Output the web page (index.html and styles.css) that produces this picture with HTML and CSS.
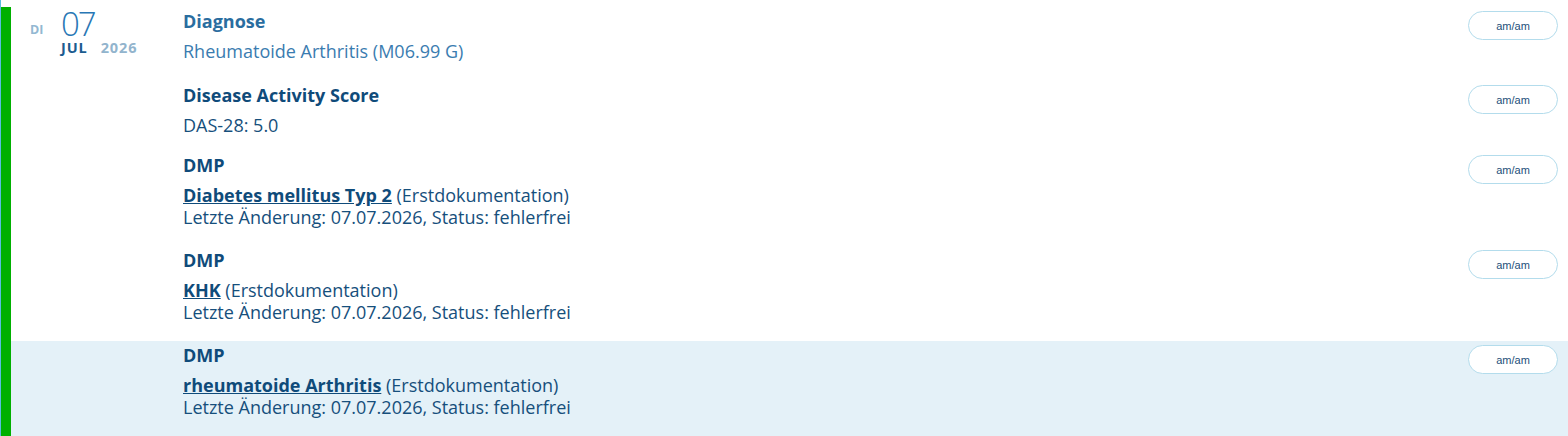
FILE: index.html
```html
<!DOCTYPE html>
<html lang="de">

<head>
    <meta charset="UTF-8">
    <meta name="viewport" content="width=device-width, initial-scale=1.0">
    <title>Verlauf</title>
    <link rel="stylesheet" href="styles.css">
</head>

<body>
    <div class="timeline">
        <div class="day">
            <div class="entry first">
                <div class="date">
                    <span class="weekday">DI</span>
                    <div class="date-main">
                        <span class="day-num">07</span>
                        <div class="month-year">
                            <span class="month">JUL</span>
                            <span class="year">2026</span>
                        </div>
                    </div>
                </div>
                <div class="entry-body">
                    <div class="entry-title light">Diagnose</div>
                    <div class="entry-text light first">Rheumatoide Arthritis (M06.99 G)</div>
                </div>
                <button class="author">am/am</button>
            </div>

            <div class="entry">
                <div class="date"></div>
                <div class="entry-body">
                    <div class="entry-title">Disease Activity Score</div>
                    <div class="entry-text first">DAS-28: 5.0</div>
                </div>
                <button class="author">am/am</button>
            </div>

            <div class="entry tall">
                <div class="date"></div>
                <div class="entry-body">
                    <div class="entry-title">DMP</div>
                    <div class="entry-text first"><a href="#">Diabetes mellitus Typ 2</a> (Erstdokumentation)</div>
                    <div class="entry-text">Letzte Änderung: 07.07.2026, Status: fehlerfrei</div>
                </div>
                <button class="author">am/am</button>
            </div>

            <div class="entry tall">
                <div class="date"></div>
                <div class="entry-body">
                    <div class="entry-title">DMP</div>
                    <div class="entry-text first"><a href="#">KHK</a> (Erstdokumentation)</div>
                    <div class="entry-text">Letzte Änderung: 07.07.2026, Status: fehlerfrei</div>
                </div>
                <button class="author">am/am</button>
            </div>

            <div class="entry tall selected">
                <div class="date"></div>
                <div class="entry-body">
                    <div class="entry-title">DMP</div>
                    <div class="entry-text first"><a href="#">rheumatoide Arthritis</a> (Erstdokumentation)</div>
                    <div class="entry-text">Letzte Änderung: 07.07.2026, Status: fehlerfrei</div>
                </div>
                <button class="author">am/am</button>
            </div>
        </div>
    </div>
</body>

</html>
```

FILE: styles.css
```css
body {
    font-family: 'Open Sans', Lato, sans-serif;
    margin: 0;
    padding: 0;
    background-color: white;
    color: #164f7c;
}

.timeline {
    border-left: 1px solid #5bbde0;
    padding-top: 7px;
    min-height: 429px;
}

.day {
    border-left: 10px solid #00b000;
}

.entry {
    display: flex;
    align-items: flex-start;
    padding: 0 10px 15px 0;
}

.entry.first {
    padding-bottom: 19px;
}

.entry.tall {
    padding-bottom: 18px;
}

.entry.selected {
    background-color: #e4f1f8;
}

/* date block, shown only on the first entry of a day */
.date {
    width: 172px;
    flex-shrink: 0;
    display: flex;
    align-items: flex-start;
    padding-left: 19px;
    box-sizing: border-box;
}

.weekday {
    font-size: 12.5px;
    font-weight: bold;
    color: #93b8d2;
    line-height: 16px;
    margin-top: 15px;
    width: 31px;
}

.date-main {
    display: flex;
    flex-direction: column;
}

.day-num {
    font-size: 33px;
    font-weight: 300;
    color: #2877b5;
    line-height: 30px;
    margin-top: 2px;
    letter-spacing: -2px;
}

.month-year {
    display: flex;
    gap: 13px;
    margin-top: 1px;
    font-size: 14.5px;
    font-weight: bold;
    line-height: 16px;
    letter-spacing: 0.9px;
}

.month {
    color: #1b5c8f;
}

.year {
    color: #92b4cd;
}

.entry-body {
    flex: 1;
    padding-top: 3px;
}

.entry-title {
    font-size: 18px;
    font-weight: bold;
    line-height: 22px;
    color: #0f4b7a;
}

.entry-title.light {
    color: #2a6d9f;
}

.entry-text {
    font-size: 18px;
    line-height: 22px;
}

.entry-text.first {
    margin-top: 8px;
}

.entry-text.light {
    color: #3a7cb0;
}

.entry-text a {
    color: #0f4b7a;
    font-weight: bold;
    text-decoration: underline;
}

.author {
    width: 90px;
    height: 29px;
    margin-top: 4px;
    border: 1px solid #b3dcec;
    border-radius: 15px;
    background: white;
    font-family: 'Liberation Sans', Arial, sans-serif;
    font-size: 11px;
    color: #1d4f7a;
    cursor: pointer;
}
```
